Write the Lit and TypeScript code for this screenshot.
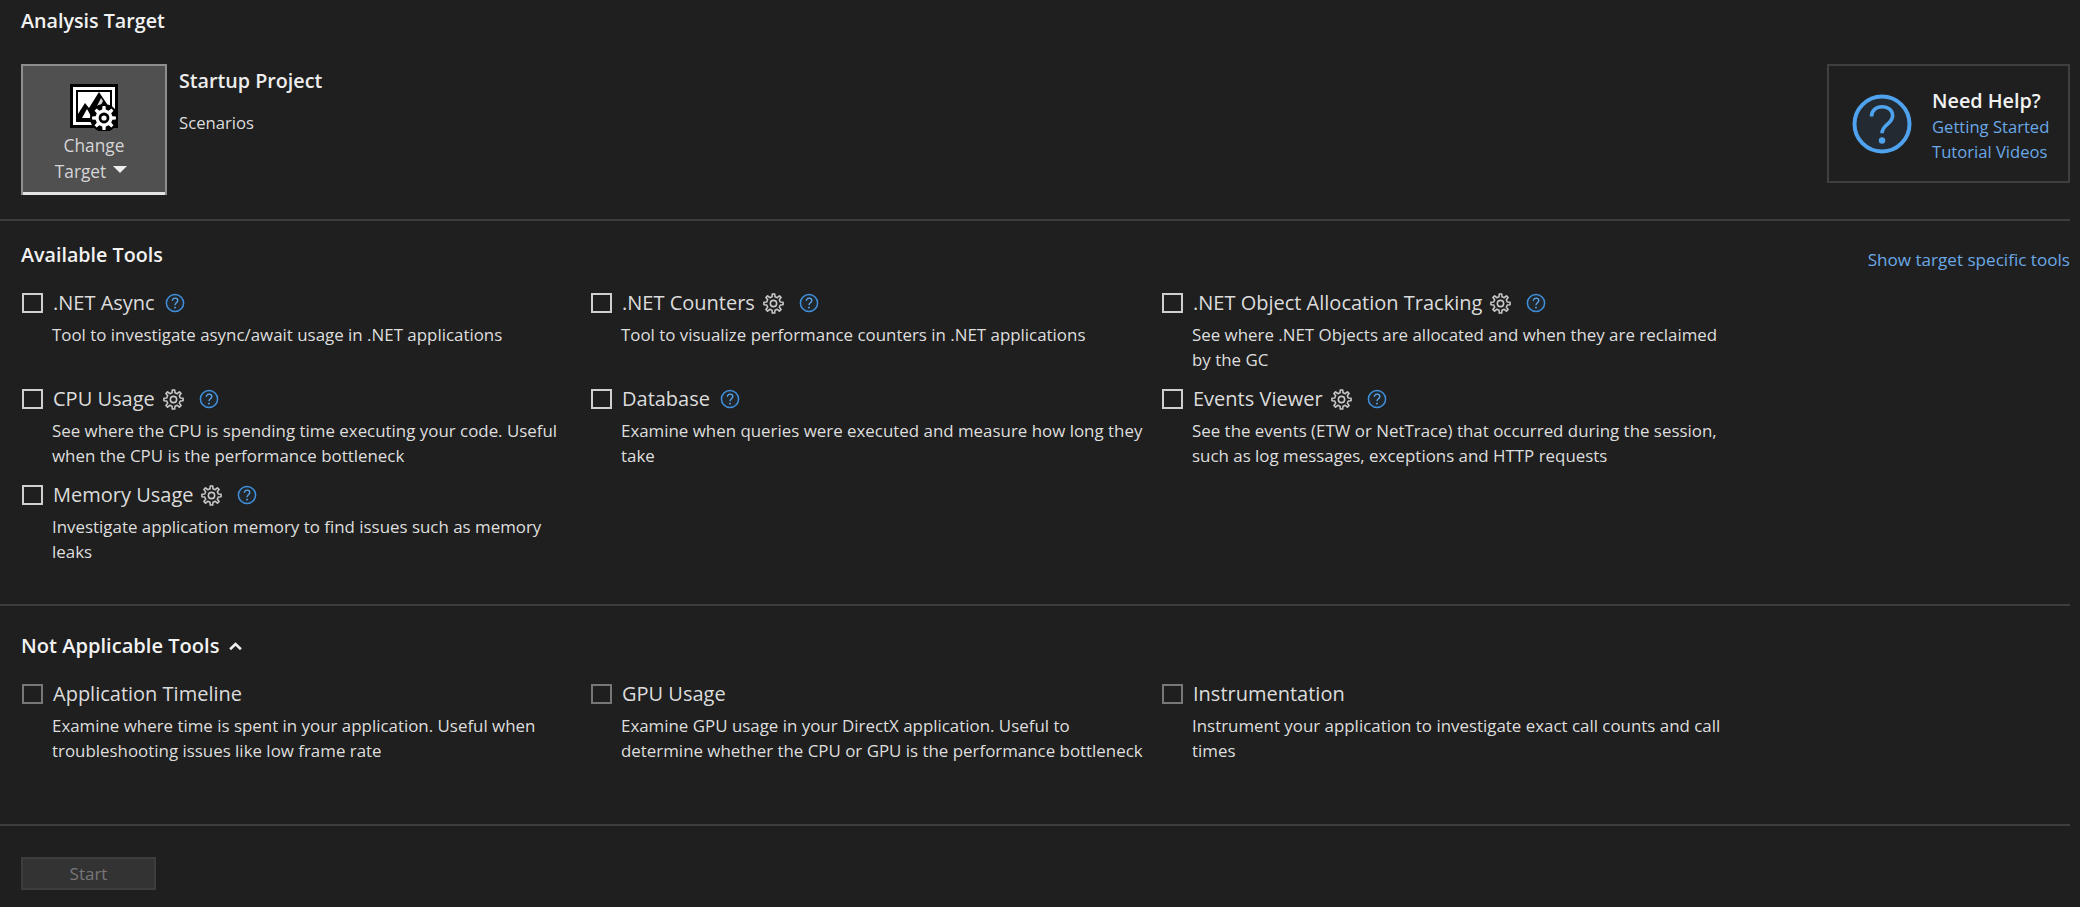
import { LitElement, html, css, svg } from "lit";
import { customElement } from "lit/decorators.js";

function gearPath(cx: number, cy: number, ro: number, ri: number, teeth = 8) {
  const pts: string[] = [];
  const step = (Math.PI * 2) / teeth;
  for (let i = 0; i < teeth; i++) {
    const a = i * step - Math.PI / 2;
    const w1 = step * 0.16, w2 = step * 0.27;
    const p = (r: number, t: number) => `${(cx + r * Math.cos(t)).toFixed(2)} ${(cy + r * Math.sin(t)).toFixed(2)}`;
    pts.push(p(ri, a - w2), p(ro, a - w1), p(ro, a + w1), p(ri, a + w2));
  }
  return "M" + pts.join("L") + "Z";
}

const gearIcon = html`<svg class="gear" viewBox="0 0 20 20" width="21" height="21">
  <path d=${gearPath(10, 10, 9.2, 6.6)} fill="none" stroke="#c8c8c8" stroke-width="1.5" stroke-linejoin="round"></path>
  <circle cx="10" cy="10" r="3" fill="none" stroke="#c8c8c8" stroke-width="1.5"></circle>
</svg>`;

const helpIcon = html`<svg class="help" viewBox="0 0 20 20" width="20" height="20">
  <circle cx="10" cy="10" r="8.6" fill="#22272c" stroke="#3f8fdc" stroke-width="1.5"></circle>
  <path d="M7.3 7.8c0-1.6 1.2-2.6 2.8-2.6s2.7 1 2.7 2.4c0 2.2-2.8 2.3-2.8 4.6" fill="none" stroke="#5aa7ee" stroke-width="1.3"></path>
  <circle cx="10" cy="14.6" r="0.95" fill="#5aa7ee"></circle>
</svg>`;

const bigHelp = html`<svg class="bighelp" viewBox="0 0 60 60" width="60" height="60">
  <circle cx="30" cy="30" r="27.5" fill="#232a31" stroke="#4fa3ee" stroke-width="4"></circle>
  <path d="M19.5 22.5c0-6 4.6-9.8 10.6-9.8 6.2 0 10.5 3.7 10.5 9 0 8.200-10.600 8.800-10.600 17.600" fill="none" stroke="#4fa3ee" stroke-width="3.6"></path>
  <circle cx="30" cy="46.500" r="3.200" fill="#4fa3ee"></circle>
</svg>`;

const targetIcon = html`<svg class="target" viewBox="0 0 48 47" width="48" height="47">
  ${svg`
  <rect x="0" y="0" width="48" height="44" fill="#000"></rect>
  <rect x="3" y="3" width="42" height="38" fill="#fff"></rect>
  <rect x="6" y="6" width="36" height="32" fill="#000"></rect>
  <rect x="8" y="8" width="32" height="28" fill="#fff"></rect>
  <path d="M8 30 L15 19 L19 24 L29 8 L37 20 L37 36 L8 36Z" fill="#000"></path>
  <path d="M12 34 L17 25 L22 34Z" fill="#fff"></path>
  <path d="M27 22 L31 14 L33 17 L30 23Z" fill="#d8d8d8"></path>
  <circle cx="34" cy="34" r="14" fill="#000"></circle>
  <path d=${gearPath(34, 34, 12, 8.6)} fill="#fff"></path>
  <circle cx="34" cy="34" r="5.4" fill="#000"></circle>
  <circle cx="34" cy="34" r="2.6" fill="#fff"></circle>
  `}
</svg>`;

interface Tool { name: string; desc: string; gear?: boolean; help?: boolean; }

const available: Tool[] = [
  { name: ".NET Async", help: true, desc: "Tool to investigate async/await usage in .NET applications" },
  { name: ".NET Counters", gear: true, help: true, desc: "Tool to visualize performance counters in .NET applications" },
  { name: ".NET Object Allocation Tracking", gear: true, help: true, desc: "See where .NET Objects are allocated and when they are reclaimed\nby the GC" },
  { name: "CPU Usage", gear: true, help: true, desc: "See where the CPU is spending time executing your code. Useful\nwhen the CPU is the performance bottleneck" },
  { name: "Database", help: true, desc: "Examine when queries were executed and measure how long they\ntake" },
  { name: "Events Viewer", gear: true, help: true, desc: "See the events (ETW or NetTrace) that occurred during the session,\nsuch as log messages, exceptions and HTTP requests" },
  { name: "Memory Usage", gear: true, help: true, desc: "Investigate application memory to find issues such as memory\nleaks" },
];

const notApplicable: Tool[] = [
  { name: "Application Timeline", desc: "Examine where time is spent in your application. Useful when\ntroubleshooting issues like low frame rate" },
  { name: "GPU Usage", desc: "Examine GPU usage in your DirectX application. Useful to\ndetermine whether the CPU or GPU is the performance bottleneck" },
  { name: "Instrumentation", desc: "Instrument your application to investigate exact call counts and call\ntimes" },
];

@customElement("app-root")
export class AppRoot extends LitElement {
  static styles = css`
    :host {
      display: block;
      width: 2080px;
      height: 907px;
      overflow: hidden;
      background: #1f1f1f;
      color: #e6e6e6;
      font-family: "Open Sans", "Noto Sans", sans-serif;
      font-size: 17px;
      box-sizing: border-box;
      padding-right: 10px;
    }
    h2 {
      margin: 0;
      font-size: 19.7px;
      font-weight: 600;
      line-height: 26px;
      color: #f2f2f2;
    }
    .top {
      height: 221px;
      box-sizing: border-box;
      padding: 8px 0 0 21px;
      border-bottom: 2px solid #3d3d3d;
    }
    .target-row {
      display: flex;
      justify-content: space-between;
      margin-top: 30px;
    }
    .left { display: flex; gap: 12px; }
    .change {
      width: 146px;
      height: 131px;
      box-sizing: border-box;
      background: #505050;
      border: 2px solid #8e8e8e;
      border-bottom: none;
      box-shadow: inset 0 -3px 0 #e4e4e4;
      display: flex;
      flex-direction: column;
      align-items: center;
      padding-top: 18px;
      color: #d6d6d6;
      font-size: 17.3px;
      line-height: 26px;
      text-align: center;
    }
    .change .target { display: block; margin-bottom: 2px; }
    .change .t2 { display: flex; align-items: center; gap: 7px; margin-left: -6px; }
    .caret {
      width: 0; height: 0;
      border-left: 7px solid transparent;
      border-right: 7px solid transparent;
      border-top: 7px solid #eee;
      margin-top: -6px;
    }
    .project { padding-top: 3px; }
    .project .pname { font-size: 19.7px; font-weight: 600; line-height: 28px; color: #ededed; }
    .project .sc { font-size: 16.7px; line-height: 24px; margin-top: 16px; color: #dcdcdc; }
    .helpbox {
      width: 243px;
      height: 119px;
      box-sizing: border-box;
      border: 2px solid #3f3f3f;
      display: flex;
      align-items: center;
      gap: 20px;
      padding-left: 23px;
    }
    .helptext { padding-top: 5px; }
    .helpbox .ht { font-size: 19.8px; font-weight: 600; line-height: 26px; color: #f2f2f2; }
    .helpbox .lnk { font-size: 16.6px; line-height: 25.5px; color: #6aa8e6; }
    .section { box-sizing: border-box; border-bottom: 2px solid #3d3d3d; }
    .avail { height: 385px; padding: 21px 0 0 21px; }
    .na { height: 220px; padding: 27px 0 0 21px; }
    .sectionhead { display: flex; justify-content: space-between; align-items: flex-start; }
    .show { font-size: 17.1px; color: #6aa8e6; line-height: 26px; margin-top: 5px; }
    .grid {
      display: grid;
      grid-template-columns: 569px 571px 560px;
      grid-auto-rows: 96px;
      margin-top: 14px;
      margin-left: 1px;
    }
    .na .grid { margin-top: 19px; }
    .tool { display: grid; grid-template-columns: 31px 1fr; grid-template-rows: 32px auto; }
    .cb {
      width: 21px; height: 20px;
      box-sizing: border-box;
      border: 2px solid #cfcfcf;
      margin-top: 6px;
    }
    .dim .cb { border-color: #777; }
    .title { display: flex; align-items: center; gap: 8px; height: 32px; }
    .tname { font-size: 20px; line-height: 32px; color: #dcdcdc; }
    .help { margin-left: 2px; }
    .gear { margin-right: 5px; }
    .desc {
      grid-column: 2;
      white-space: pre;
      font-size: 16.9px;
      line-height: 25px;
      color: #dedede;
      margin-top: 3px;
      margin-left: -1px;
    }
    .chev { margin-left: 9px; }
    .nah { display: flex; align-items: center; }
    .nah h2 { font-size: 20.1px; }
    .footer { padding: 31px 0 0 21px; }
    .start {
      width: 135px; height: 33px;
      box-sizing: border-box;
      background: #333;
      border: 2px solid #3d3d3d;
      color: #777;
      font-size: 17px;
      line-height: 29px;
      text-align: center;
    }
  `;

  renderTool(t: Tool, dim = false) {
    return html`<div class="tool ${dim ? "dim" : ""}">
      <div class="cb"></div>
      <div class="title">
        <span class="tname">${t.name}</span>
        ${t.gear ? gearIcon : ""}
        ${t.help ? helpIcon : ""}
      </div>
      <div class="desc">${t.desc}</div>
    </div>`;
  }

  render() {
    return html`
      <div class="top">
        <h2>Analysis Target</h2>
        <div class="target-row">
          <div class="left">
            <div class="change">
              ${targetIcon}
              <div>Change</div>
              <div class="t2">Target <span class="caret"></span></div>
            </div>
            <div class="project">
              <div class="pname">Startup Project</div>
              <div class="sc">Scenarios</div>
            </div>
          </div>
          <div class="helpbox">
            ${bigHelp}
            <div class="helptext">
              <div class="ht">Need Help?</div>
              <div class="lnk">Getting Started</div>
              <div class="lnk">Tutorial Videos</div>
            </div>
          </div>
        </div>
      </div>
      <div class="section avail">
        <div class="sectionhead">
          <h2>Available Tools</h2>
          <div class="show">Show target specific tools</div>
        </div>
        <div class="grid">${available.map((t) => this.renderTool(t))}</div>
      </div>
      <div class="section na">
        <div class="nah">
          <h2>Not Applicable Tools</h2>
          <svg class="chev" viewBox="0 0 12 8" width="13" height="9">
            <path d="M1 6.500 L6 1.800 L11 6.500" fill="none" stroke="#eee" stroke-width="2.400"></path>
          </svg>
        </div>
        <div class="grid">${notApplicable.map((t) => this.renderTool(t, true))}</div>
      </div>
      <div class="footer"><div class="start">Start</div></div>
    `;
  }
}
